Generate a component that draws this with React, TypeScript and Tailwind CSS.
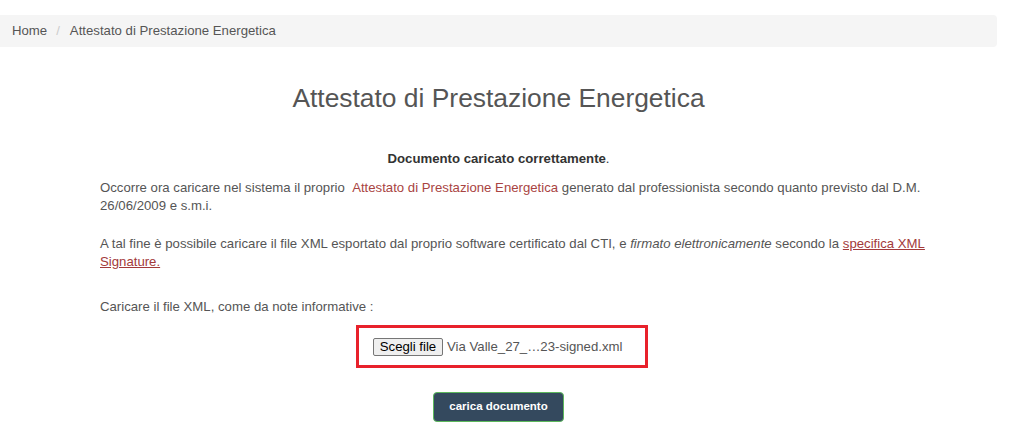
import React from "react";

export default function App() {
  return (
    <div
      className="w-[1024px] h-[431px] overflow-hidden bg-white text-[#555] pt-[15px]"
      style={{ fontFamily: '"Liberation Sans", Arial, sans-serif' }}
    >
      <div className="w-[997px] h-[32px] bg-[#f5f5f5] rounded-r-[4px] flex items-center pl-[12px] text-[13.2px] leading-[18px]">
        <span className="text-[#555]">Home</span>
        <span className="ml-[9px] text-[#ccc]">/</span>
        <span className="ml-[10px] text-[#555]">Attestato di Prestazione Energetica</span>
      </div>

      <div className="w-[997px]">
        <h1 className="mt-[36px] text-center text-[26.4px] leading-[30px] font-normal text-[#555]">
          Attestato di Prestazione Energetica
        </h1>

        <div className="mt-[37px] text-center text-[13.2px] leading-[18.5px] font-bold text-[#333]">
          Documento caricato correttamente<span className="font-normal">.</span>
        </div>

        <p className="mt-[10px] ml-[100px] w-[850px] text-[13.2px] leading-[18.5px]">
          Occorre ora caricare nel sistema il proprio{" "}
          <span className="text-[#a94442]">{"\u00a0"}Attestato di Prestazione Energetica</span>{" "}
          generato dal professionista secondo quanto previsto dal D.M. 26/06/2009 e s.m.i.
        </p>

        <p className="mt-[19px] ml-[100px] w-[850px] text-[13.2px] leading-[18.5px]">
          A tal fine è possibile caricare il file XML esportato dal proprio software certificato dal CTI, e{" "}
          <i>firmato elettronicamente</i> secondo la{" "}
          <a className="text-[#a33a3a] underline decoration-[#a33a3a]">specifica XML Signature.</a>
        </p>

        <p className="mt-[26px] ml-[100px] text-[13.2px] leading-[18.5px]">
          Caricare il file XML, come da note informative :
        </p>

        <div className="mt-[9px] ml-[356px] w-[292px] h-[43px] border-[3px] border-[#e8212b] flex items-center pl-[14px]">
          <div className="h-[18px] w-[70px] flex items-center justify-center bg-[#efefef] border border-[#767676] rounded-[2px] text-[13.2px] text-black leading-none">
            Scegli file
          </div>
          <span className="ml-[4px] text-[13.2px] text-[#555]">Via Valle_27_…23-signed.xml</span>
        </div>

        <div className="mt-[24px] flex justify-center">
          <button className="w-[131px] h-[30px] bg-[#34495e] border border-[#5cb85c] rounded-[4px] text-white text-[11.5px] font-bold leading-none">
            carica documento
          </button>
        </div>
      </div>
    </div>
  );
}
